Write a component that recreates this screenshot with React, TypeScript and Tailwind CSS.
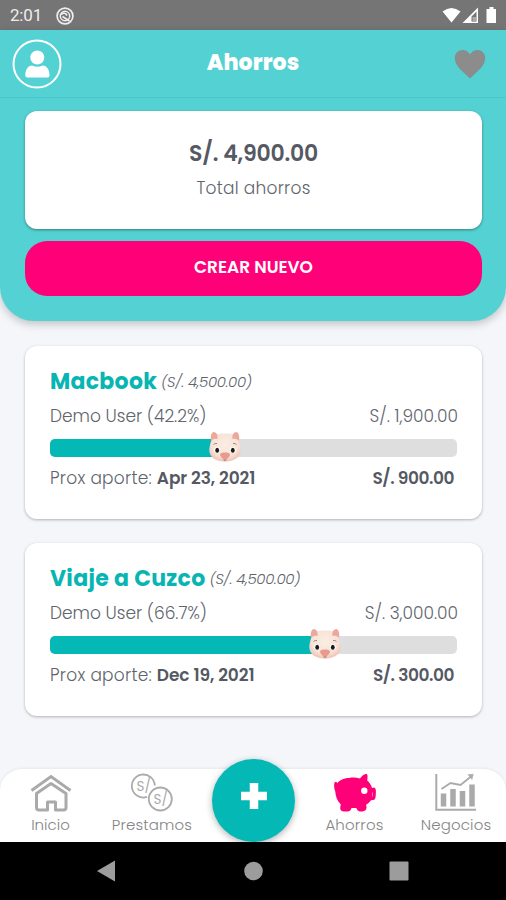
import React from "react";

interface Saving {
  name: string;
  goal: string;
  user: string;
  saved: string;
  percent: number;
  date: string;
  next: string;
}

const savings: Saving[] = [
  {
    name: "Macbook",
    goal: "(S/. 4,500.00)",
    user: "Demo User (42.2%)",
    saved: "S/. 1,900.00",
    percent: 43.1,
    date: "Apr 23, 2021",
    next: "S/. 900.00",
  },
  {
    name: "Viaje a Cuzco",
    goal: "(S/. 4,500.00)",
    user: "Demo User (66.7%)",
    saved: "S/. 3,000.00",
    percent: 67.6,
    date: "Dec 19, 2021",
    next: "S/. 300.00",
  },
];

const PigFace: React.FC = () => (
  <svg width="34" height="32" viewBox="0 0 34 32">
    <defs>
      <radialGradient id="face" cx="50%" cy="40%" r="60%">
        <stop offset="0" stopColor="#fbeee2" />
        <stop offset="0.7" stopColor="#f8e2d7" />
        <stop offset="1" stopColor="#f0c3b5" />
      </radialGradient>
    </defs>
    <path
      d="M6 4C11 2 23 2 28 4C30.500 7 31.500 12 32.600 17C33.500 24 29 28 24 29.500C20 31 14 31 10 29.500C5 28 .5 24 1.400 17C2.500 12 3.500 7 6 4Z"
      fill="url(#face)"
    />
    <path d="M3 9.500C2.200 6 3 2 5.500 1C8.500 1 10 4 9.500 8C7.500 7.500 5 8 3 9.500Z" fill="#eda89b" />
    <path d="M31 9.500C31.800 6 31 2 28.500 1C25.500 1 24 4 24.500 8C26.500 7.500 29 8 31 9.500Z" fill="#eda89b" />
    <path d="M5.500 13.500Q7 12 9 12.500M25 12.500Q27 12 28.500 13.500" fill="none" stroke="#a98579" strokeWidth="1" />
    <ellipse cx="9" cy="19" rx="2.900" ry="3" fill="#fff" />
    <ellipse cx="25" cy="19" rx="2.900" ry="3" fill="#fff" />
    <ellipse cx="9.200" cy="19.300" rx="1.900" ry="2.500" fill="#1d1918" />
    <ellipse cx="24.800" cy="19.300" rx="1.900" ry="2.500" fill="#1d1918" />
    <path d="M12 23.300C12.500 21 21.500 21 22 23.300C22 25.800 19 28.500 17 28.500C15 28.500 12 25.800 12 23.300Z" fill="#e89a8e" />
    <path d="M15.500 28.800Q17 29.600 18.500 28.800" fill="none" stroke="#a8665c" strokeWidth="1" />
  </svg>
);

const StatusBar: React.FC = () => (
  <div className="flex h-[30px] items-center justify-between bg-[#757575] pl-[10px] pr-[8px] text-[#eee]">
    <div className="flex items-center gap-[14px] pt-px">
      <span className="font-[Roboto] text-[17px] leading-none tracking-[-0.2px]">2:01</span>
      <svg width="18" height="18" viewBox="0 0 18 18" fill="none" stroke="#eee">
        <circle cx="9" cy="9" r="7.900" strokeWidth="1.700" />
        <circle cx="9" cy="9" r="4.700" strokeWidth="1.500" />
        <path d="M5 7.500Q9 4.500 11 8.500M6.500 9.500L13.500 14" strokeWidth="1.700" />
      </svg>
    </div>
    <svg width="56" height="18" viewBox="0 0 56 18" fill="#fff">
      <path d="M.500 5.500Q9.500-1.500 18.500 5.500L9.500 16.500Z" />
      <path fillRule="evenodd" d="M20.500 17L36 1.500V17ZM29.500 10.500V15.500H34.500V5.500Z" />
      <path d="M30.500 11H34V16H30.500Z" fill="#aaa" />
      <path d="M47.500 1H51.500V3H54V17H44.500V3H47.500Z" />
    </svg>
  </div>
);

const Header: React.FC = () => (
  <header className="flex h-[68px] items-center justify-between border-b border-[#4ac8c9] pl-[12px] pr-[20px]">
    <svg width="50" height="50" viewBox="0 0 50 50">
      <circle cx="25" cy="25" r="23.500" fill="none" stroke="#fff" strokeWidth="2" />
      <circle cx="25.300" cy="18.500" r="7" fill="#fff" />
      <path d="M13.300 36.500C13.300 29.500 17 26.500 20 26.500Q25.500 29 30.500 26.500C34 26.500 37.500 29.500 37.500 36.500Q37.500 38.500 35.500 38.500H15.300Q13.300 38.500 13.300 36.500Z" fill="#fff" />
    </svg>
    <h1 className="mb-px ml-[-10px] text-[22px] font-extrabold leading-none tracking-[0.1px] text-white">
      Ahorros
    </h1>
    <svg width="32" height="30" viewBox="0 0 32 30">
      <path d="M16 29.500C7 21 .800 16.500 .800 9C.800 4 4.300 1 8.500 1C12 1 14.500 3 16 5.500C17.500 3 20 1 23.500 1C27.700 1 31.200 4 31.200 9C31.200 16.500 25 21 16 29.500Z" fill="#8c8c8c" />
    </svg>
  </header>
);

const SavingCard: React.FC<{ saving: Saving }> = ({ saving }) => (
  <div className="h-[173px] rounded-xl bg-white px-[25px] pt-[23px] shadow-[0_1px_3px_rgba(0,0,0,0.28)]">
    <div className="flex h-[26px] items-center whitespace-nowrap">
      <span className="text-[22px] font-bold leading-none tracking-[0.3px] text-[#07b5b2]">
        {saving.name}
      </span>
      <span className="ml-[4px] text-[15px] font-light italic tracking-[-0.35px]">
        {saving.goal}
      </span>
    </div>
    <div className="mt-[9px] flex h-[26px] items-center justify-between text-[17px] font-light">
      <span>{saving.user}</span>
      <span className="mr-[-1px]">{saving.saved}</span>
    </div>
    <div className="relative mt-[9px] h-[18px] rounded-[5px] bg-[#dedede]">
      <div
        className="h-full rounded-l-[5px] bg-[#03b8b5]"
        style={{ width: `${saving.percent}%` }}
      />
      <div
        className="absolute top-[-8px] -translate-x-1/2"
        style={{ left: `${saving.percent}%` }}
      >
        <PigFace />
      </div>
    </div>
    <div className="mt-[9px] flex h-[26px] items-center justify-between pr-[3px] text-[17px] font-light">
      <span className="tracking-[0.25px]">
        Prox aporte:{" "}
        <b className="font-semibold tracking-[-0.1px] text-[#555963]">{saving.date}</b>
      </span>
      <b className="font-semibold tracking-[-0.45px] text-[#555963]">{saving.next}</b>
    </div>
  </div>
);

const Footer: React.FC = () => (
  <footer>
    <nav className="relative flex h-[73px] rounded-t-[22px] bg-white pt-[4px] text-[15px] font-light text-[#858585] shadow-[0_-1px_3px_rgba(0,0,0,0.06)]">
      <div className="flex w-[101px] flex-col items-center">
        <svg width="42" height="40" viewBox="0 0 42 40" fill="none" stroke="#aaa" strokeWidth="3">
          <path d="M1.500 17.500L21 3.500L40.500 17.500" />
          <path d="M6.500 20.500L21 10.500L36 20.500V34.500Q36 37 33.500 37H25.500V29H17.500V37H9Q6.500 37 6.500 34.500Z" strokeLinejoin="round" />
        </svg>
        <span className="mt-[2px] leading-[20px]">Inicio</span>
      </div>
      <div className="flex w-[102px] flex-col items-center">
        <svg width="44" height="40" viewBox="0 0 44 40" fill="none" stroke="#aaa" strokeWidth="1.800">
          <path d="M17 23.900A11.500 11.500 0 1 1 24.800 12.500" />
          <circle cx="30.300" cy="26" r="11.500" />
          <text x="6.500" y="17.500" fontSize="13.500" fontWeight="400" fill="#aaa" stroke="none">S/</text>
          <text x="23.500" y="30.500" fontSize="13.500" fontWeight="400" fill="#aaa" stroke="none">S/</text>
        </svg>
        <span className="mt-[2px] leading-[20px] tracking-[0.15px]">Prestamos</span>
      </div>
      <div className="w-[101px]" />
      <div className="flex w-[101px] flex-col items-center">
        <svg width="42" height="40" viewBox="0 0 42 40" fill="#ff0078">
          <path d="M3 10.500C6 6.500 11 5 15 5C19 4.300 23 4.500 26 5.500C27.500 3.500 29.500 1.500 32.300 .800C34 1.500 33.600 4.500 33.200 7.500C35.500 9.500 37.300 12 38 15L40.500 14.500C42 15.500 42 18 41.800 21C41.800 25 41 27 39 27L37 27.300C35.500 29.500 33.500 31 32 32C33 34 32.500 36.500 31 37.500C29.500 38.600 27 38.600 25 38.300C23.300 37.500 22.800 36 22.300 35H17.500C17 37.500 15.500 38.500 13 38.500C9.500 38.800 6.500 38 6.300 36C6 34.500 6.500 33 6.800 31.500C3.500 28 1.500 24 1.300 18.500C0 15.500-.300 12 .600 9.300C2 8.300 3 8.500 3 10.500Z" />
          <circle cx="30.300" cy="17.800" r="3.200" fill="#fff" />
          <path d="M38.500 19.500V23.500" stroke="#fff" strokeWidth="0.800" strokeOpacity="0.600" />
        </svg>
        <span className="mt-[2px] leading-[20px] tracking-[0.15px]">Ahorros</span>
      </div>
      <div className="flex w-[101px] flex-col items-center">
        <svg width="42" height="40" viewBox="0 0 42 40" fill="none" stroke="#aaa">
          <path d="M1.300 1V36.800H41" strokeWidth="2" />
          <path d="M8.500 20.500V33.500M18 16V33.500M27.500 18V33.500M37 11.500V33.500" strokeWidth="5.500" />
          <path d="M6.500 16L15.500 10L25.500 12L36 3.500" strokeWidth="1.800" />
          <path d="M33 1.500L38.300 1.200L37 6.500Z" fill="#aaa" strokeWidth="0.500" />
        </svg>
        <span className="ml-px mt-[2px] leading-[20px] tracking-[0.15px]">Negocios</span>
      </div>
      <button className="absolute left-[212px] top-[-10px] flex h-[83px] w-[83px] items-start justify-center rounded-full bg-[#03b8b5] pt-[24px] shadow-[0_2px_7px_rgba(0,0,0,0.3)]">
        <svg width="26" height="26" viewBox="0 0 26 26">
          <path d="M13 0V26M0 13H26" stroke="#fff" strokeWidth="8.500" />
        </svg>
      </button>
    </nav>
    <div className="relative flex h-[58px] items-center bg-black">
      <svg width="506" height="58" viewBox="0 0 506 58" fill="#9c9c9c">
        <path d="M97 29L115 18.500V39.500Z" />
        <circle cx="253.500" cy="29" r="9.300" />
        <rect x="389.500" y="19.500" width="19" height="19" rx="1" />
      </svg>
    </div>
  </footer>
);

const App: React.FC = () => {
  return (
    <div className="flex h-[900px] w-[506px] flex-col overflow-hidden bg-[#f4f6fa] font-['Poppins','Inter',sans-serif] text-[#60646c]">
      <StatusBar />
      <section className="h-[291px] shrink-0 rounded-b-[34px] bg-[#54d2d3] shadow-[0_3px_8px_rgba(0,0,0,0.22)]">
        <Header />
        <div className="pl-[25px] pr-[24px] pt-[13px]">
          <div className="flex h-[118px] flex-col items-center rounded-xl bg-white pt-[30px] shadow-[0_1px_3px_rgba(0,0,0,0.4)]">
            <span className="text-[22px] font-semibold leading-[26px] tracking-[-0.2px] text-[#555963]">
              S/. 4,900.00
            </span>
            <span className="mt-[9px] text-[17px] font-light leading-[24px] tracking-[0.25px]">
              Total ahorros
            </span>
          </div>
          <button className="mt-[12px] h-[55px] w-full rounded-[22px] bg-[#ff0078] pb-[1px] text-[17px] font-semibold text-white">
            CREAR NUEVO
          </button>
        </div>
      </section>
      <main className="flex flex-1 flex-col gap-[24px] pl-[25px] pr-[24px] pt-[25px]">
        {savings.map((saving) => (
          <SavingCard key={saving.name} saving={saving} />
        ))}
      </main>
      <Footer />
    </div>
  );
};

export default App;
